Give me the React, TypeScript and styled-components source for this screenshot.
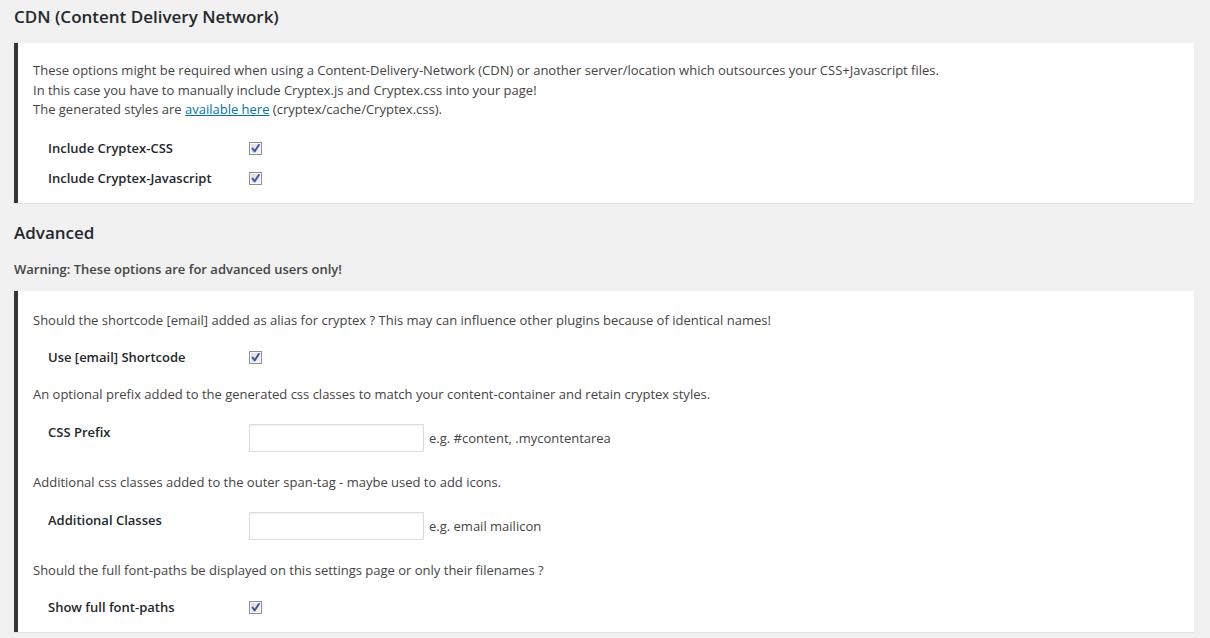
import React from "react";
import styled, { createGlobalStyle } from "styled-components";

const GlobalStyle = createGlobalStyle`
  html, body {
    margin: 0;
    padding: 0;
    background: #f1f1f1;
  }
  body {
    font-family: "Open Sans", "Noto Sans", sans-serif;
    font-size: 13px;
    line-height: 1.4em;
    color: #444;
  }
  * { box-sizing: border-box; }
`;

const Page = styled.div`
  display: flex;
  flex-direction: column;
  padding: 0 16px 0 14px;
  min-height: 638px;
`;

const Heading = styled.h2<{ $top: number; $bottom: number }>`
  margin: ${(p) => p.$top}px 0 ${(p) => p.$bottom}px;
  font-size: 17px;
  line-height: 22px;
  font-weight: 600;
  color: #23282d;
`;

const Warning = styled.p`
  margin: 0 0 12px;
  font-weight: 600;
  line-height: 20px;
  color: #444;
`;

const Panel = styled.section<{ $top: number }>`
  display: flex;
  flex-direction: column;
  background: #fff;
  border-left: 4px solid #32373c;
  box-shadow: 0 1px 1px rgba(0, 0, 0, 0.06);
  padding: ${(p) => p.$top}px 15px 15px;
`;

const Intro = styled.div`
  line-height: 19.5px;
  margin-bottom: 18.5px;
  p {
    margin: 0;
  }
`;

const Link = styled.a`
  color: #0073aa;
  text-decoration: underline;
`;

const Rows = styled.div<{ $gap: number }>`
  display: flex;
  flex-direction: column;
  gap: ${(p) => p.$gap}px;
`;

const Desc = styled.p`
  margin: 0;
  line-height: 20px;
`;

const Row = styled.div<{ $input?: boolean }>`
  display: flex;
  align-items: ${(p) => (p.$input ? "flex-start" : "center")};
  padding: ${(p) => (p.$input ? "1px 0 3px 15px" : "0 0 0 15px")};
  min-height: 20px;
`;

const Label = styled.label`
  width: 201px;
  flex: none;
  font-weight: 600;
  color: #23282d;
  line-height: 20px;
`;

const CheckBox = styled.span`
  display: inline-flex;
  align-items: center;
  justify-content: center;
  width: 13px;
  height: 13px;
  border: 1px solid #8e8f8f;
  background: linear-gradient(135deg, #dcdcdc 0%, #f4f4f4 100%);
  box-shadow: inset 0 0 0 1px #f8f8f8;
`;

const InputGroup = styled.div`
  display: flex;
  align-items: center;
  margin-top: 2px;
  gap: 5px;
`;

const TextInput = styled.input`
  width: 175px;
  height: 28px;
  margin: 0;
  padding: 3px 5px;
  border: 1px solid #ddd;
  box-shadow: inset 0 1px 2px rgba(0, 0, 0, 0.07);
  background: #fff;
  font-family: inherit;
  font-size: 14px;
  color: #32373c;
  outline: none;
`;

const Hint = styled.span`
  line-height: 20px;
  color: #444;
`;

function Check() {
  return (
    <CheckBox role="checkbox" aria-checked="true">
      <svg width="11" height="11" viewBox="0 0 11 11">
        <path
          d="M2.6 5.6 L4.6 8.4 L8.9 1.9"
          fill="none"
          stroke="#3d55a6"
          strokeWidth="1.9"
          strokeLinecap="round"
          strokeLinejoin="round"
        />
      </svg>
    </CheckBox>
  );
}

export default function App() {
  return (
    <>
      <GlobalStyle />
      <Page>
        <Heading $top={6} $bottom={15}>CDN (Content Delivery Network)</Heading>
        <Panel $top={18}>
          <Intro>
            <p>
              These options might be required when using a Content-Delivery-Network (CDN) or another server/location which
              outsources your CSS+Javascript files.
            </p>
            <p>In this case you have to manually include Cryptex.js and Cryptex.css into your page!</p>
            <p>
              The generated styles are <Link href="#">available here</Link> (cryptex/cache/Cryptex.css).
            </p>
          </Intro>
          <Rows $gap={10}>
            <Row>
              <Label>Include Cryptex-CSS</Label>
              <Check />
            </Row>
            <Row>
              <Label>Include Cryptex-Javascript</Label>
              <Check />
            </Row>
          </Rows>
        </Panel>

        <Heading $top={19} $bottom={15}>Advanced</Heading>
        <Warning>Warning: These options are for advanced users only!</Warning>
        <Panel $top={19}>
          <Rows $gap={17}>
            <Desc>
              Should the shortcode [email] added as alias for cryptex ? This may can influence other plugins because of
              identical names!
            </Desc>
            <Row>
              <Label>Use [email] Shortcode</Label>
              <Check />
            </Row>
            <Desc>
              An optional prefix added to the generated css classes to match your content-container and retain cryptex
              styles.
            </Desc>
            <Row $input>
              <Label>CSS Prefix</Label>
              <InputGroup>
                <TextInput type="text" />
                <Hint>e.g. #content, .mycontentarea</Hint>
              </InputGroup>
            </Row>
            <Desc>Additional css classes added to the outer span-tag - maybe used to add icons.</Desc>
            <Row $input>
              <Label>Additional Classes</Label>
              <InputGroup>
                <TextInput type="text" />
                <Hint>e.g. email mailicon</Hint>
              </InputGroup>
            </Row>
            <Desc>Should the full font-paths be displayed on this settings page or only their filenames ?</Desc>
            <Row>
              <Label>Show full font-paths</Label>
              <Check />
            </Row>
          </Rows>
        </Panel>
      </Page>
    </>
  );
}
